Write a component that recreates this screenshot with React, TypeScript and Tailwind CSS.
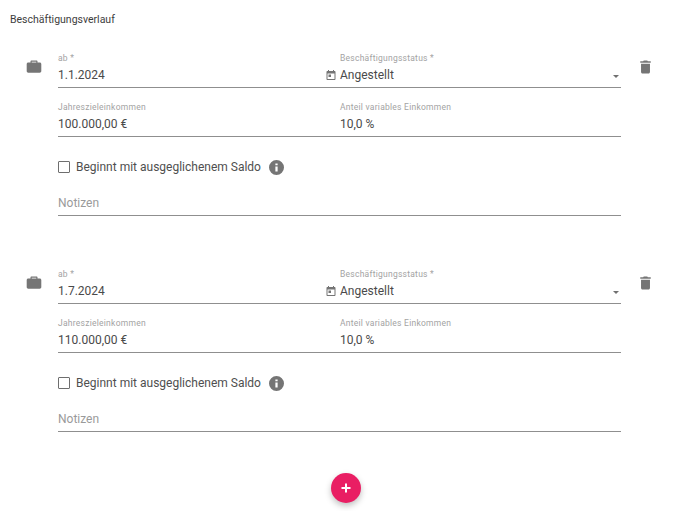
import React from "react";

const ENTRIES = [
  { from: "1.1.2024", income: "100.000,00 €" },
  { from: "1.7.2024", income: "110.000,00 €" },
];

function Field({ label, value, children }: { label: string; value: string; children?: React.ReactNode }) {
  return (
    <div className="relative h-[49px] border-b border-[#8f8f8f] pt-[13px]">
      <div className="h-[12px] text-[8.5px] leading-[12px] tracking-[0.25px] text-[#a3a3a3]">{label}</div>
      <div className="mt-[2px] h-[18px] text-[12px] leading-[18px] text-[#4a4a4a]">{value}</div>
      {children}
    </div>
  );
}

function Entry({ from, income }: { from: string; income: string }) {
  return (
    <div className="flex h-[216px]">
      <div className="w-[48px] shrink-0 pl-[16px] pt-[19px]">
        <svg width="16" height="16" viewBox="0 0 16 16" fill="#757575">
          <path d="M5.5 2.6h5c.6 0 1 .4 1 1V4.500h2.200c.9 0 1.600.7 1.600 1.600v7c0 .9-.7 1.600-1.600 1.600H2.300c-.9 0-1.600-.7-1.600-1.600v-7c0-.9.7-1.600 1.600-1.600h2.200V3.600c0-.6.4-1 1-1zm.2 1.900h4.600V3.700H5.700z" />
        </svg>
      </div>
      <div className="w-[563px] shrink-0">
        <div className="grid grid-cols-[282px_281px]">
          <Field label="ab *" value={from}>
            <svg className="absolute left-[267px] top-[30px]" width="12" height="12" viewBox="0 0 24 24" fill="#757575">
              <path d="M19 4h-1V2h-2v2H8V2H6v2H5c-1.100 0-2 .9-2 2v14c0 1.100.9 2 2 2h14c1.100 0 2-.9 2-2V6c0-1.100-.9-2-2-2zm0 16H5V9h14v11zM7 11h5v5H7z" />
            </svg>
          </Field>
          <Field label="Beschäftigungsstatus *" value="Angestellt">
            <svg className="absolute right-[2px] top-[36px]" width="6" height="3" viewBox="0 0 6 3" fill="#707070">
              <path d="M0 0h6L3 3z" />
            </svg>
          </Field>
          <Field label="Jahreszieleinkommen" value={income} />
          <Field label="Anteil variables Einkommen" value="10,0 %" />
        </div>
        <div className="mt-[20px] flex h-[20px] items-center">
          <div className="h-[12px] w-[12px] rounded-[1px] border border-[#6e6e6e]" />
          <span className="ml-[6px] text-[12px] text-[#4f4f4f]">Beginnt mit ausgeglichenem Saldo</span>
          <svg className="ml-[8px]" width="15" height="15" viewBox="0 0 24 24" fill="#757575">
            <path d="M12 0a12 12 0 1 0 0 24 12 12 0 0 0 0-24zm1.800 18.500h-3.600V10.500h3.600zm0-10h-3.600V5.500h3.600z" />
          </svg>
        </div>
        <div className="mt-[15px] h-[24px] border-b border-[#8f8f8f] pt-[2px] text-[12px] leading-[18px] text-[#9a9a9a]">Notizen</div>
      </div>
      <div className="pl-[19px] pt-[21px]">
        <svg width="11" height="14" viewBox="0 0 12 16" fill="#757575">
          <path d="M4 .5h4l.7 1H12v1.700H0V1.500h3.300zM.9 4.200h10.200v9.600c0 1-.8 1.700-1.700 1.700H2.600c-.9 0-1.700-.7-1.700-1.700z" />
        </svg>
      </div>
    </div>
  );
}

export default function App() {
  return (
    <div className="h-[511px] w-[691px] overflow-hidden bg-white font-['Roboto',sans-serif]">
      <div className="h-[39px] pl-[10px] pt-[12px] text-[10.5px] leading-[15px] text-[#3d3d3d]">Beschäftigungsverlauf</div>
      <div className="pl-[10px]">
        {ENTRIES.map((e) => (
          <Entry key={e.from} from={e.from} income={e.income} />
        ))}
      </div>
      <div className="mt-[2px] flex justify-center">
        <button className="flex h-[30px] w-[30px] items-center justify-center rounded-full bg-[#e91e63] shadow-[0_3px_6px_rgba(0,0,0,0.25)]">
          <svg width="12" height="12" viewBox="0 0 12 12" fill="#ffffff">
            <path d="M5 1.500h2v3.500h3.500v2H7v3.500H5V7H1.500V5H5z" />
          </svg>
        </button>
      </div>
    </div>
  );
}
